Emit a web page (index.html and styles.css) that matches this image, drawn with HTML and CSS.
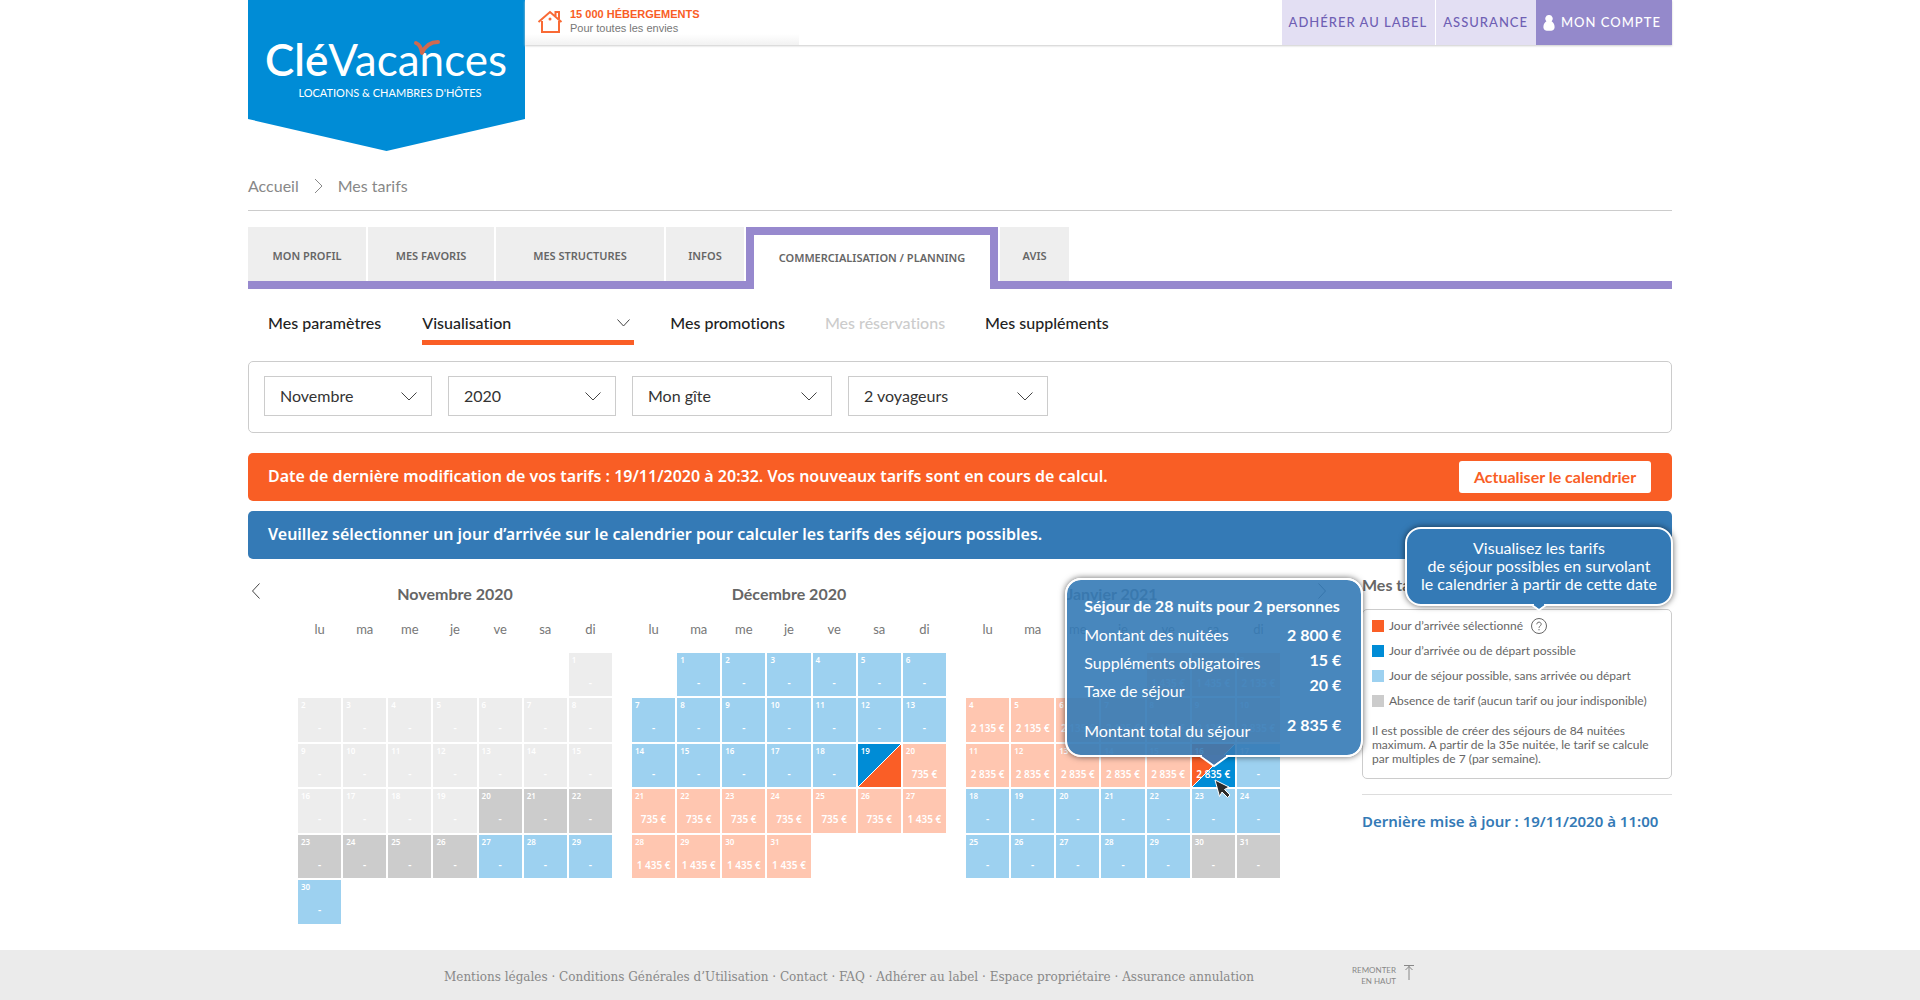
FILE: index.html
```
<!DOCTYPE html>
<html lang="fr">
<head>
<meta charset="utf-8">
<title>Clévacances - Mes tarifs</title>
<meta name="viewport" content="width=device-width, initial-scale=1">
<link rel="stylesheet" href="styles.css">
</head>
<body>
<div class="wrap">
  <header class="top">
    <a class="logo" href="#" aria-label="Clévacances">
      <svg width="277" height="151" viewBox="0 0 277 151">
        <path fill="#008cd6" d="M0 0h277v119L138.500 151 0 119z"/>
        <text class="logo-name" x="17" y="76"><tspan class="logo-cle">Clé</tspan>Vacances</text>
        <path d="M168 43q5 2 6 10q5-11 16-11" fill="none" stroke="#d0694f" stroke-width="4" stroke-linecap="round" stroke-linejoin="round"/>
        <text class="logo-sub" x="142" y="97" text-anchor="middle">LOCATIONS &amp; CHAMBRES D'HÔTES</text>
      </svg>
    </a>
    <div class="bar">
      <div class="promo">
        <svg width="26" height="24" viewBox="0 0 26 24" fill="none" stroke="#f96a35" stroke-width="2">
          <path d="M1.500 13 13 3l11.500 10M5 12v11h17V12M18.500 7V3H22v7"/>
          <circle cx="13" cy="10" r="1.500" fill="#f96a35" stroke="none"/>
        </svg>
        <p><strong>15 000 HÉBERGEMENTS</strong><br>Pour toutes les envies</p>
      </div>
      <nav class="account" aria-label="Compte">
        <a href="#">ADHÉRER AU LABEL</a>
        <a href="#">ASSURANCE</a>
        <a class="mine" href="#"><svg width="12" height="16" viewBox="0 0 12 16"><path fill="#fff" d="M6 0a3.600 3.600 0 0 1 2.600 6.200C10.500 7.500 12 9.500 11.500 13c-.3 2-2 2.800-5.500 2.800S.8 15 .5 13C0 9.500 1.500 7.500 3.400 6.200A3.600 3.600 0 0 1 6 0z"/></svg>MON COMPTE</a>
      </nav>
    </div>
  </header>

  <nav class="crumbs" aria-label="Fil d'Ariane">
    <a href="#">Accueil</a>
    <svg width="9" height="16" viewBox="0 0 9 16" fill="none" stroke="#888"><path d="M1 1l7 7-7 7"/></svg>
    <span>Mes tarifs</span>
  </nav>

  <nav class="tabs" aria-label="Espace propriétaire">
    <a class="t-profil" href="#">MON PROFIL</a>
    <a class="t-favoris" href="#">MES FAVORIS</a>
    <a class="t-struct" href="#">MES STRUCTURES</a>
    <a class="t-infos" href="#">INFOS</a>
    <a class="active" href="#">COMMERCIALISATION / PLANNING</a>
    <a class="t-avis" href="#">AVIS</a>
  </nav>

  <nav class="sub" aria-label="Planning">
    <a href="#">Mes paramètres</a>
    <a class="current" href="#">Visualisation <svg width="13" height="8" viewBox="0 0 13 8" fill="none" stroke="#444"><path d="M.5.5l6 6.500 6-6.500"/></svg></a>
    <a href="#">Mes promotions</a>
    <a class="off" href="#">Mes réservations</a>
    <a href="#">Mes suppléments</a>
  </nav>

  <form class="filters">
    <div class="pick short"><select aria-label="Mois"><option>Novembre</option></select><svg width="16" height="9" viewBox="0 0 16 9" fill="none" stroke="#444"><path d="M.5.5l7.500 7.500L15.500.5"/></svg></div>
    <div class="pick short"><select aria-label="Année"><option>2020</option></select><svg width="16" height="9" viewBox="0 0 16 9" fill="none" stroke="#444"><path d="M.5.5l7.500 7.500L15.500.5"/></svg></div>
    <div class="pick"><select aria-label="Hébergement"><option>Mon gîte</option></select><svg width="16" height="9" viewBox="0 0 16 9" fill="none" stroke="#444"><path d="M.5.5l7.500 7.500L15.500.5"/></svg></div>
    <div class="pick"><select aria-label="Voyageurs"><option>2 voyageurs</option></select><svg width="16" height="9" viewBox="0 0 16 9" fill="none" stroke="#444"><path d="M.5.5l7.500 7.500L15.500.5"/></svg></div>
  </form>

  <div class="notice orange">
    <p>Date de dernière modification de vos tarifs : 19/11/2020 à 20:32. Vos nouveaux tarifs sont en cours de calcul.</p>
    <button type="button">Actualiser le calendrier</button>
  </div>
  <div class="notice blue">
    <p>Veuillez sélectionner un jour d’arrivée sur le calendrier pour calculer les tarifs des séjours possibles.</p>
  </div>

  <main class="planning">
    <button class="arrow prev" type="button" aria-label="Mois précédents"><svg width="8" height="16" viewBox="0 0 8 16" fill="none" stroke="#444"><path d="M7.500.5l-7 7.500 7 7.500"/></svg></button>
    <div class="months">
      <table>
        <caption>Novembre 2020</caption>
        <thead><tr><th>lu</th><th>ma</th><th>me</th><th>je</th><th>ve</th><th>sa</th><th>di</th></tr></thead>
        <tbody>
          <tr><td></td><td></td><td></td><td></td><td></td><td></td><td class="past"><b>1</b><span>-</span></td></tr>
          <tr><td class="past"><b>2</b><span>-</span></td><td class="past"><b>3</b><span>-</span></td><td class="past"><b>4</b><span>-</span></td><td class="past"><b>5</b><span>-</span></td><td class="past"><b>6</b><span>-</span></td><td class="past"><b>7</b><span>-</span></td><td class="past"><b>8</b><span>-</span></td></tr>
          <tr><td class="past"><b>9</b><span>-</span></td><td class="past"><b>10</b><span>-</span></td><td class="past"><b>11</b><span>-</span></td><td class="past"><b>12</b><span>-</span></td><td class="past"><b>13</b><span>-</span></td><td class="past"><b>14</b><span>-</span></td><td class="past"><b>15</b><span>-</span></td></tr>
          <tr><td class="past"><b>16</b><span>-</span></td><td class="past"><b>17</b><span>-</span></td><td class="past"><b>18</b><span>-</span></td><td class="past"><b>19</b><span>-</span></td><td class="none"><b>20</b><span>-</span></td><td class="none"><b>21</b><span>-</span></td><td class="none"><b>22</b><span>-</span></td></tr>
          <tr><td class="none"><b>23</b><span>-</span></td><td class="none"><b>24</b><span>-</span></td><td class="none"><b>25</b><span>-</span></td><td class="none"><b>26</b><span>-</span></td><td class="stay"><b>27</b><span>-</span></td><td class="stay"><b>28</b><span>-</span></td><td class="stay"><b>29</b><span>-</span></td></tr>
          <tr><td class="stay"><b>30</b><span>-</span></td><td></td><td></td><td></td><td></td><td></td><td></td></tr>
        </tbody>
      </table>
      <table>
        <caption>Décembre 2020</caption>
        <thead><tr><th>lu</th><th>ma</th><th>me</th><th>je</th><th>ve</th><th>sa</th><th>di</th></tr></thead>
        <tbody>
          <tr><td></td><td class="stay"><b>1</b><span>-</span></td><td class="stay"><b>2</b><span>-</span></td><td class="stay"><b>3</b><span>-</span></td><td class="stay"><b>4</b><span>-</span></td><td class="stay"><b>5</b><span>-</span></td><td class="stay"><b>6</b><span>-</span></td></tr>
          <tr><td class="stay"><b>7</b><span>-</span></td><td class="stay"><b>8</b><span>-</span></td><td class="stay"><b>9</b><span>-</span></td><td class="stay"><b>10</b><span>-</span></td><td class="stay"><b>11</b><span>-</span></td><td class="stay"><b>12</b><span>-</span></td><td class="stay"><b>13</b><span>-</span></td></tr>
          <tr><td class="stay"><b>14</b><span>-</span></td><td class="stay"><b>15</b><span>-</span></td><td class="stay"><b>16</b><span>-</span></td><td class="stay"><b>17</b><span>-</span></td><td class="stay"><b>18</b><span>-</span></td><td class="arrival"><b>19</b></td><td class="rate"><b>20</b><span>735 €</span></td></tr>
          <tr><td class="rate"><b>21</b><span>735 €</span></td><td class="rate"><b>22</b><span>735 €</span></td><td class="rate"><b>23</b><span>735 €</span></td><td class="rate"><b>24</b><span>735 €</span></td><td class="rate"><b>25</b><span>735 €</span></td><td class="rate"><b>26</b><span>735 €</span></td><td class="rate"><b>27</b><span>1 435 €</span></td></tr>
          <tr><td class="rate"><b>28</b><span>1 435 €</span></td><td class="rate"><b>29</b><span>1 435 €</span></td><td class="rate"><b>30</b><span>1 435 €</span></td><td class="rate"><b>31</b><span>1 435 €</span></td><td></td><td></td><td></td></tr>
        </tbody>
      </table>
      <table>
        <caption class="last">Janvier 2021</caption>
        <thead><tr><th>lu</th><th>ma</th><th>me</th><th>je</th><th>ve</th><th>sa</th><th>di</th></tr></thead>
        <tbody>
          <tr><td></td><td></td><td></td><td></td><td class="rate"><b>1</b><span>1 435 €</span></td><td class="rate"><b>2</b><span>1 435 €</span></td><td class="rate"><b>3</b><span>2 135 €</span></td></tr>
          <tr><td class="rate"><b>4</b><span>2 135 €</span></td><td class="rate"><b>5</b><span>2 135 €</span></td><td class="rate"><b>6</b><span>2 135 €</span></td><td class="rate"><b>7</b><span>2 135 €</span></td><td class="rate"><b>8</b><span>2 135 €</span></td><td class="rate"><b>9</b><span>2 135 €</span></td><td class="rate"><b>10</b><span>2 835 €</span></td></tr>
          <tr><td class="rate"><b>11</b><span>2 835 €</span></td><td class="rate"><b>12</b><span>2 835 €</span></td><td class="rate"><b>13</b><span>2 835 €</span></td><td class="rate"><b>14</b><span>2 835 €</span></td><td class="rate"><b>15</b><span>2 835 €</span></td>
            <td class="departure"><b>16</b><span>2 835 €</span>
              <div class="quote" role="tooltip">
                <h2>Séjour de 28 nuits pour 2 personnes</h2>
                <div class="lines">
                  <div class="labels"><p>Montant des nuitées</p><p>Suppléments obligatoires</p><p>Taxe de séjour</p><p>Montant total du séjour</p></div>
                  <div class="values"><p>2 800 €</p><p>15 €</p><p>20 €</p><p>2 835 €</p></div>
                </div>
                <svg class="tip" width="30" height="13" viewBox="0 0 30 13"><path fill="#4877ab" stroke="#fff" stroke-width="2" d="M0 1h1l14 10 14-10h1"/><path fill="#4877ab" d="M3 0h24v1L15 9.500 3 1z"/></svg>
              </div>
              <svg class="cursor" width="18" height="20" viewBox="0 0 18 20"><path fill="#2b2b2b" stroke="#fff" d="M1 1l14 7-4.500 2.500 5.500 5.500-2.500 2.500L8 13l-2.500 4.500z"/></svg>
            </td><td class="stay"><b>17</b><span>-</span></td></tr>
          <tr><td class="stay"><b>18</b><span>-</span></td><td class="stay"><b>19</b><span>-</span></td><td class="stay"><b>20</b><span>-</span></td><td class="stay"><b>21</b><span>-</span></td><td class="stay"><b>22</b><span>-</span></td><td class="stay"><b>23</b><span>-</span></td><td class="stay"><b>24</b><span>-</span></td></tr>
          <tr><td class="stay"><b>25</b><span>-</span></td><td class="stay"><b>26</b><span>-</span></td><td class="stay"><b>27</b><span>-</span></td><td class="stay"><b>28</b><span>-</span></td><td class="stay"><b>29</b><span>-</span></td><td class="none"><b>30</b><span>-</span></td><td class="none"><b>31</b><span>-</span></td></tr>
        </tbody>
      </table>
    </div>
    <button class="arrow next" type="button" aria-label="Mois suivants"><svg width="8" height="16" viewBox="0 0 8 16" fill="none" stroke="#444"><path d="M.5.5l7 7.500-7 7.500"/></svg></button>

    <aside class="legend">
      <h2>Mes tarifs</h2>
      <div class="key">
        <ul>
          <li><i class="k-selected"></i>Jour d’arrivée sélectionné
            <svg width="16" height="16" viewBox="0 0 16 16" fill="none" stroke="#666"><circle cx="8" cy="8" r="7.500"/><path d="M5.800 6.300c0-3 4.500-2.800 4.400 0C10.200 8 8 8 8 9.800M8 11v1.300"/></svg></li>
          <li><i class="k-possible"></i>Jour d’arrivée ou de départ possible</li>
          <li><i class="k-stay"></i>Jour de séjour possible, sans arrivée ou départ</li>
          <li><i class="k-none"></i>Absence de tarif (aucun tarif ou jour indisponible)</li>
        </ul>
        <p>Il est possible de créer des séjours de 84 nuitées<br>maximum. A partir de la 35e nuitée, le tarif se calcule<br>par multiples de 7 (par semaine).</p>
      </div>
      <p class="updated">Dernière mise à jour : 19/11/2020 à 11:00</p>
      <div class="help" role="tooltip">Visualisez les tarifs<br>de séjour possibles en survolant<br>le calendrier à partir de cette date
        <svg class="tip" width="18" height="8" viewBox="0 0 18 8"><path fill="#347ab6" stroke="#fff" stroke-width="2" d="M2 1l7 5 7-5"/><path fill="#347ab6" d="M4 0h10v1L9 4.500 4 1z"/></svg>
      </div>
    </aside>
  </main>
</div>

<footer class="foot">
  <div class="foot-in">
    <nav aria-label="Pied de page"><a href="#">Mentions légales</a> · <a href="#">Conditions Générales d’Utilisation</a> · <a href="#">Contact</a> · <a href="#">FAQ</a> · <a href="#">Adhérer au label</a> · <a href="#">Espace propriétaire</a> · <a href="#">Assurance annulation</a></nav>
    <a class="up" href="#"><span>REMONTER<br>EN HAUT</span><svg width="10" height="16" viewBox="0 0 10 16" fill="none" stroke="#888"><path d="M0 .5h10M5 1v14M1.500 5L5 1.500 8.500 5"/></svg></a>
  </div>
</footer>
</body>
</html>
```
FILE: styles.css
```
* { box-sizing: border-box; }
body {
  margin: 0;
  background: #fff;
  color: #333;
  font: 16px/20px Lato, "Noto Sans", sans-serif;
  font-variant-ligatures: none;
}
a { color: inherit; text-decoration: none; }
p, h2, ul { margin: 0; padding: 0; }
ul { list-style: none; }
button, select { font: inherit; color: inherit; }
svg { flex: none; }

.wrap { max-width: 1424px; margin: 0 auto; }

/* Header */
.top { display: flex; align-items: flex-start; }
.logo { height: 151px; }
.logo svg { display: block; }
.logo-name { font-size: 44px; fill: #fff; }
.logo-cle { font-weight: 600; }
.logo-sub { font-size: 11px; fill: #fff; }
.bar {
  flex: 1;
  display: flex;
  justify-content: space-between;
  height: 45px;
  box-shadow: 0 1px 2px #ccc;
}
.promo {
  display: flex;
  gap: 7px;
  width: 274px;
  padding: 7px 0 0 12px;
  background: linear-gradient(#fff 34px, #f3f3f3 44px);
  color: #777;
  font: 11px/14px "Liberation Sans", sans-serif;
}
.promo strong { color: #f95d25; }
.promo svg { margin-top: 2px; }
.account {
  display: flex;
  gap: 1px;
  font: 500 13px/37px Lato, sans-serif;
  letter-spacing: 1px;
  color: #6f5fb4;
}
.account a { padding: 4px 8px 4px 7px; background: #e3dff3; }
.account .mine {
  display: flex;
  align-items: center;
  gap: 6px;
  width: 136px;
  margin-left: -1px;
  background: #9489cb;
  color: #fff;
}

/* Breadcrumb */
.crumbs {
  display: flex;
  align-items: center;
  gap: 15px;
  height: 60px;
  padding-top: 10px;
  border-bottom: 1px solid #ccc;
  color: #888;
}

/* Main tabs */
.tabs {
  display: flex;
  gap: 2px;
  height: 62px;
  margin-top: 16px;
  border-bottom: 8px solid #9789ce;
  color: #666;
  font: 600 11px/58px "Noto Sans", sans-serif;
  text-align: center;
  white-space: nowrap;
}
.tabs a { background: #eee; }
.t-profil { width: 118px; }
.t-favoris { width: 126px; }
.t-struct { width: 168px; }
.t-infos { width: 78px; }
.t-avis { width: 69px; }
.tabs .active {
  width: 252px;
  margin-bottom: -8px;
  border: 8px solid #9789ce;
  border-bottom: 0;
  background: #fff;
  line-height: 46px;
}

/* Secondary navigation */
.sub {
  display: flex;
  gap: 40px;
  height: 56px;
  padding-left: 20px;
  font-weight: 500;
  line-height: 68px;
  color: #222;
}
.sub .current {
  display: flex;
  justify-content: space-between;
  align-items: center;
  width: 212px;
  margin: 0 -4px 0 1px;
  padding: 17px 4px 0 0;
  border-bottom: 5px solid #fa5e26;
  line-height: 34px;
}
.sub .off { color: #ccc; }

/* Filters */
.filters {
  display: flex;
  gap: 16px;
  margin-top: 16px;
  padding: 14px 15px 16px;
  border: 1px solid #ccc;
  border-radius: 5px;
}
.pick { display: grid; align-items: center; width: 200px; }
.pick.short { width: 168px; }
.pick > * { grid-area: 1 / 1; }
.pick svg { justify-self: end; margin-right: 15px; pointer-events: none; }
.pick select {
  width: 100%;
  height: 40px;
  padding: 0 15px;
  border: 1px solid #ccc;
  border-radius: 0;
  background: #fff;
  appearance: none;
}

/* Notices */
.notice {
  display: flex;
  align-items: center;
  justify-content: space-between;
  height: 48px;
  margin-top: 10px;
  padding: 0 21px 0 20px;
  border-radius: 5px;
  color: #fff;
  font-family: "Noto Sans", sans-serif;
  font-weight: 600;
}
.notice p { padding-bottom: 2px; }
.orange { margin-top: 20px; background: #f95e25; }
.blue { background: #347ab6; }
.notice button {
  width: 192px;
  height: 32px;
  padding: 0;
  border: 0;
  border-radius: 3px;
  background: #fff;
  color: #f95e25;
  font: 700 16px/20px Lato, sans-serif;
}

/* Calendars */
.planning {
  display: grid;
  grid-template-columns: 48px 1fr 80px 310px;
  align-items: start;
  padding-bottom: 24px;
}
.arrow {
  display: flex;
  margin-top: 24px;
  padding: 0 4px;
  border: 0;
  background: none;
}
.next { padding-left: 36px; }
.months {
  display: grid;
  grid-template-columns: repeat(3, 1fr);
  align-items: start;
  gap: 16px;
}
table { width: 100%; table-layout: fixed; border-spacing: 2px; }
caption { padding-top: 25px; color: #666; font-weight: 700; }
.last { padding-right: 22px; }
th { height: 45px; padding: 0; color: #777; font-size: 13px; font-weight: 400; }
td {
  height: 43px;
  padding: 0;
  vertical-align: top;
  color: #fff;
  font: 600 10px/16px "Noto Sans", sans-serif;
}
tr:nth-child(even) td { height: 44px; }
td > b { display: block; padding-left: 3px; font-size: 8px; font-weight: 600; line-height: 14px; }
td > span { display: block; padding-top: 8px; text-align: center; white-space: nowrap; }
.past { background: #ededed; }
.none { background: #ccc; }
.stay { background: #9dd1f0; }
.rate { background: #ffc6b0; }
.arrival { background: linear-gradient(135deg, #008cd6 49%, #fff 49%, #fff 51%, #fa5e26 51%); }
.departure { position: relative; background: linear-gradient(135deg, #fa5e26 49%, #fff 49%, #fff 51%, #008cd6 51%); }
.cursor { position: absolute; left: 22px; top: 35px; z-index: 3; }

/* Stay quote shown over the hovered day */
.quote {
  position: absolute;
  z-index: 2;
  left: 50%;
  bottom: 30px;
  width: 298px;
  margin-left: -148px;
  padding: 16px 20px 10px 17px;
  border: 2px solid #fff;
  border-radius: 16px;
  background: rgba(52, 122, 182, .9);
  background-clip: padding-box;
  box-shadow: 0 0 6px rgba(0, 0, 0, .6);
  font: 16px/20px Lato, sans-serif;
  white-space: nowrap;
}
.quote h2 { margin-bottom: 5px; font-size: 16px; font-weight: 700; }
.lines { display: flex; justify-content: space-between; }
.labels p { line-height: 28px; }
.values { padding-top: 1px; text-align: right; font-weight: 700; }
.values p { line-height: 25px; }
.labels p:last-child { margin-top: 12px; }
.values p:last-child { margin-top: 15px; }
.tip { position: absolute; }
.quote .tip { left: 132px; bottom: -13px; }

/* Legend */
.legend { position: relative; color: #666; font-size: 12px; }
.legend h2 { margin: 16px 0 14px; font-size: 16px; font-weight: 700; }
.key { padding: 3px 9px 12px; border: 1px solid #ccc; border-radius: 5px; line-height: 14px; white-space: nowrap; }
.key li { display: flex; align-items: center; gap: 5px; height: 25px; }
.key li svg { margin-left: 3px; }
.key i { width: 12px; height: 12px; }
.key p { margin-top: 11px; }
.k-selected { background: #fa5e26; }
.k-possible { background: #008cd6; }
.k-stay { background: #9dd1f0; }
.k-none { background: #ccc; }
.updated {
  margin-top: 15px;
  padding-top: 16px;
  border-top: 1px solid #ddd;
  color: #347ab6;
  font: 600 15px/20px "Noto Sans", sans-serif;
  white-space: nowrap;
}
.help {
  position: absolute;
  right: -1px;
  top: -32px;
  width: 268px;
  padding: 10px 0 11px;
  border: 2px solid #fff;
  border-radius: 16px;
  background: #347ab6;
  box-shadow: 0 0 6px rgba(0, 0, 0, .6);
  color: #fff;
  font-size: 16px;
  line-height: 18px;
  text-align: center;
  white-space: nowrap;
}
.help .tip { left: 123px; bottom: -8px; }

/* Footer */
.foot { background: #ebebeb; color: #888; }
.foot-in {
  display: flex;
  align-items: center;
  justify-content: space-between;
  max-width: 1424px;
  min-height: 51px;
  margin: 0 auto;
  padding: 0 258px 0 196px;
}
.foot nav { padding-top: 2px; font: 12px/20px "DejaVu Serif", serif; }
.up { display: flex; align-items: flex-start; gap: 8px; font: 8px/11px Lato, sans-serif; text-align: right; }
```
